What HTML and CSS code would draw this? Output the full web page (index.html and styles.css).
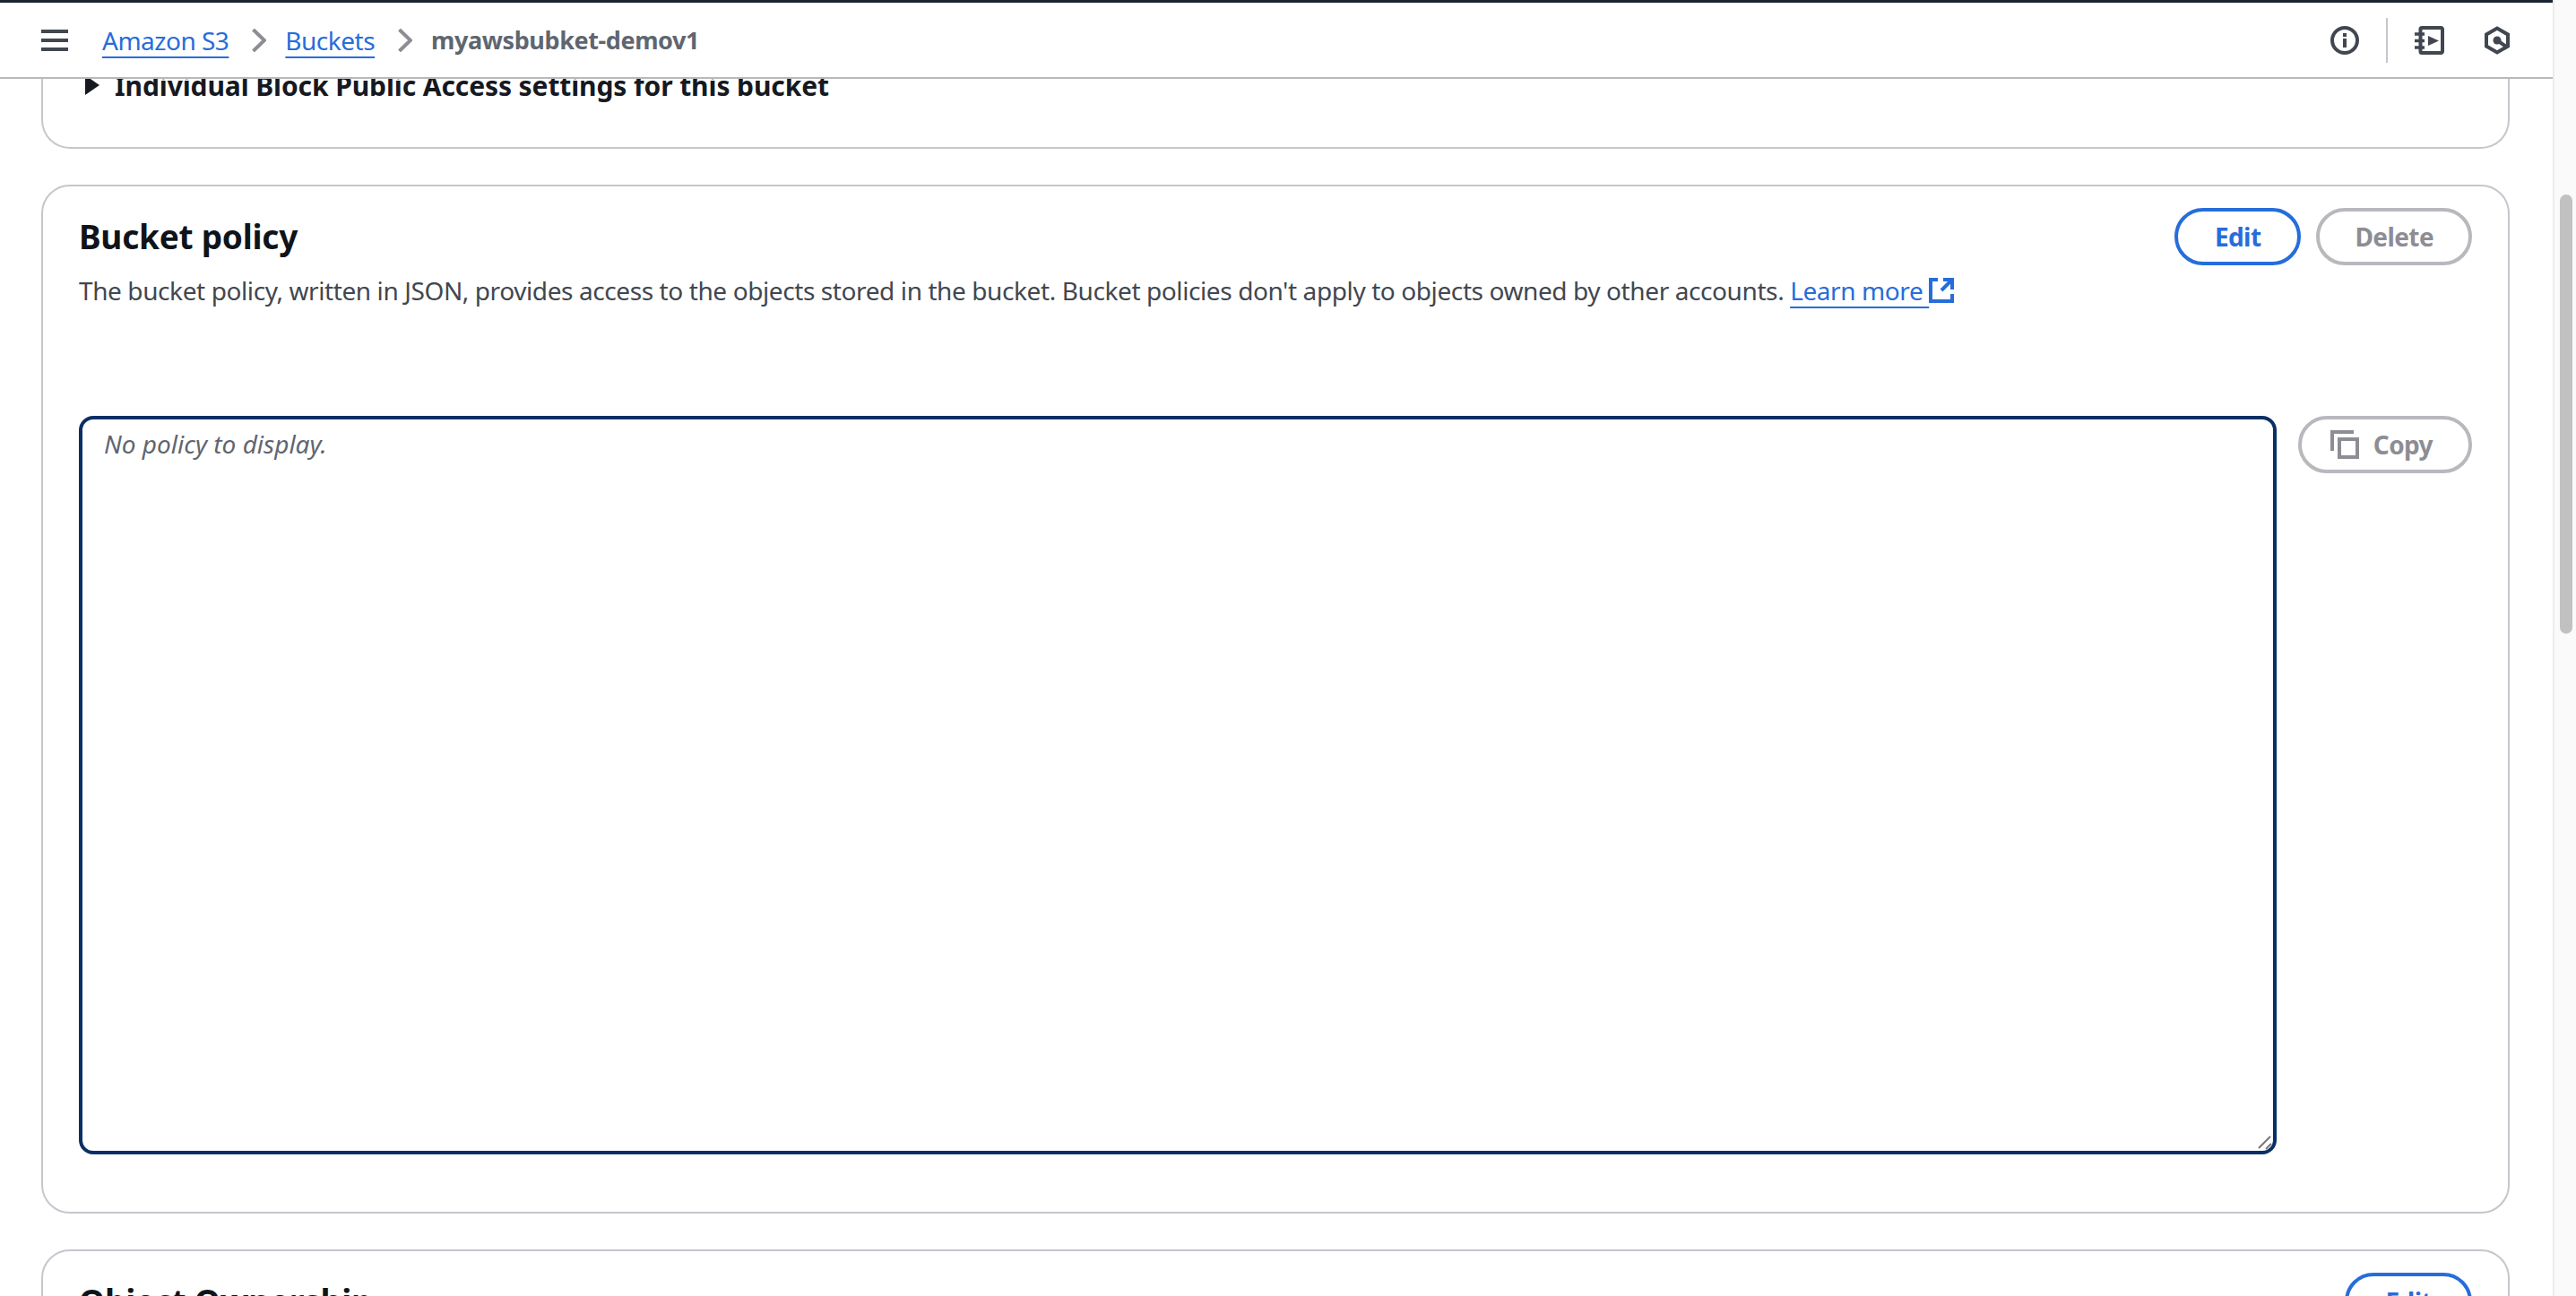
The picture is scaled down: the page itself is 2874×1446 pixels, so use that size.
FILE: index.html
```html
<!DOCTYPE html>
<html lang="en">
<head>
<meta charset="utf-8">
<title>myawsbubket-demov1 - Amazon S3</title>
<link rel="stylesheet" href="styles.css">
</head>
<body>
<div class="window">
  <div class="main">
    <header class="topbar">
      <nav class="crumbs">
        <svg class="menu-icon" viewBox="0 0 30 24" aria-hidden="true"><path d="M0 2h30M0 12h30M0 22h30"/></svg>
        <a class="crumb-link" href="#">Amazon S3</a>
        <svg class="chevron" viewBox="0 0 16 26" aria-hidden="true"><path d="M1.500 1l12.500 12L1.500 25"/></svg>
        <a class="crumb-link" href="#">Buckets</a>
        <svg class="chevron" viewBox="0 0 16 26" aria-hidden="true"><path d="M1.500 1l12.500 12L1.500 25"/></svg>
        <span class="crumb-current">myawsbubket-demov1</span>
      </nav>
      <div class="tools">
        <svg class="tool tool-info" viewBox="0 0 32 32" aria-hidden="true"><circle cx="16" cy="16" r="14"/><path d="M16 14v10"/><path d="M16 8v4"/></svg>
        <span class="tool-divider"></span>
        <svg class="tool tool-notebook" viewBox="0 0 33 32" aria-hidden="true"><path d="M8 2h21.500a1.500 1.500 0 0 1 1.500 1.500v25a1.500 1.500 0 0 1-1.500 1.500H8a1.500 1.500 0 0 1-1.500-1.500v-25A1.500 1.500 0 0 1 8 2z"/><path class="rings" d="M0 9h11M0 16.500h11M0 24h11"/><path class="fill" d="M15 11l12 5.500-12 5.500z"/></svg>
        <svg class="tool tool-hex" viewBox="0 0 28 32" aria-hidden="true"><path d="M14 2.500l12 7v13l-12 7-12-7v-13z"/><circle class="fill" cx="14" cy="16" r="4.500"/><path d="M14 16l11 7.500"/></svg>
      </div>
    </header>
    <div class="content">
      <section class="card card-clipped">
        <div class="disclosure"><span class="caret"></span><strong>Individual Block Public Access settings for this bucket</strong></div>
      </section>
      <section class="card">
        <div class="card-head">
          <h2>Bucket policy</h2>
          <div class="actions">
            <button class="btn btn-edit" type="button">Edit</button>
            <button class="btn btn-disabled" type="button">Delete</button>
          </div>
        </div>
        <p class="desc">The bucket policy, written in JSON, provides access to the objects stored in the bucket. Bucket policies don't apply to objects owned by other accounts. <a class="learn" href="#">Learn more&nbsp;</a><svg class="ext-icon" viewBox="0 0 28 28" aria-hidden="true"><path d="M10 2H2v24h24V18"/><path d="M16 2h10v11M14 14L25 3"/></svg></p>
        <div class="policy-row">
          <div class="policy-box">
            <textarea class="policy" placeholder="No policy to display."></textarea>
            <svg class="grip" viewBox="0 0 16 16" aria-hidden="true"><path d="M1 14L14 1M9 15l6-6"/></svg>
          </div>
          <button class="btn btn-disabled btn-copy" type="button"><svg class="copy-icon" viewBox="0 0 32 32" aria-hidden="true"><path d="M2 23V2h24"/><path d="M10 10h20v20H10z"/></svg>Copy</button>
        </div>
      </section>
      <section class="card">
        <div class="card-head">
          <h2>Object Ownership</h2>
          <div class="actions">
            <button class="btn btn-edit" type="button">Edit</button>
          </div>
        </div>
      </section>
    </div>
  </div>
  <div class="scrollbar"><div class="thumb"></div></div>
</div>
</body>
</html>
```
FILE: styles.css
```css
* { box-sizing: border-box; }
html, body { margin: 0; height: 100%; overflow: hidden; background: #fff; }
body { font-family: "Noto Sans", "Open Sans", sans-serif; font-size: 28px; color: #16191f; }
.window { display: grid; grid-template-columns: 1fr 26px; height: 1446px; }
.main { display: flex; flex-direction: column; overflow: hidden; min-width: 0; }

.topbar {
  position: relative; z-index: 2; flex: none;
  display: flex; align-items: center; justify-content: space-between;
  height: 88px; padding: 0 48px 0 46px; background: #fff;
  border-top: 3px solid #1b2430; border-bottom: 2px solid #b8b8bd;
}
.crumbs { display: flex; align-items: center; }
.menu-icon { width: 30px; height: 24px; margin-right: 38px; fill: none; stroke: #414750; stroke-width: 4; }
.crumb-link { color: #266ddb; letter-spacing: -0.5px; text-decoration: underline; text-decoration-thickness: 2px; text-underline-offset: 7px; text-decoration-skip-ink: none; }
.chevron { width: 16px; height: 26px; margin: 0 21px 0 26px; fill: none; stroke: #8d8d94; stroke-width: 4; }
.crumb-current { font-size: 27px; font-weight: 700; letter-spacing: -0.4px; color: #5f6670; }
.tools { display: flex; align-items: center; }
.tool { height: 32px; fill: none; stroke: #414750; stroke-width: 4; }
.tool .fill { fill: #414750; stroke: none; }
.tool .rings { stroke-width: 3.500; }
.tool-info { width: 32px; }
.tool-divider { width: 2px; height: 50px; margin: 0 30px; background: #c6c6cd; }
.tool-notebook { width: 33px; margin-right: 45px; }
.tool-hex { width: 28px; }

.content { flex: 1; min-height: 0; overflow: hidden; display: flex; flex-direction: column; gap: 40px; padding: 0 48px 0 46px; margin-top: -13px; }
.card { flex: none; border: 2px solid #c6c6cd; border-radius: 32px; padding: 24px 40px 64px 40px; background: #fff; }
.card-clipped { border-top: 0; border-top-left-radius: 0; border-top-right-radius: 0; padding: 0 40px 49px 47px; }
.disclosure { display: flex; align-items: center; height: 40px; gap: 17px; font-size: 30px; letter-spacing: -0.1px; }
.disclosure strong { font-weight: 700; }
.caret { width: 0; height: 0; border-left: 16px solid #16191f; border-top: 11px solid transparent; border-bottom: 11px solid transparent; }

.card-head { display: flex; align-items: center; justify-content: space-between; height: 64px; }
h2 { margin: 0; font-size: 37px; font-weight: 700; letter-spacing: -0.25px; color: #0f141a; line-height: 44px; }
.actions { display: flex; gap: 17px; }
.btn {
  height: 64px; padding: 0 39px; border-radius: 32px; background: #fff; letter-spacing: -0.6px;
  font: 700 28px "Noto Sans", "Open Sans", sans-serif; display: flex; align-items: center;
}
.btn-edit { color: #266ddb; border: 4px solid #266ddb; padding: 0 41px; }
.btn-disabled { color: #8d8d94; border: 4px solid #b8b8bd; }
.desc { margin: 8px 0 0; line-height: 40px; color: #414750; letter-spacing: -0.4px; }
.learn { color: #266ddb; text-decoration: underline; text-decoration-thickness: 2px; text-underline-offset: 7px; text-decoration-skip-ink: none; }
.ext-icon { width: 28px; height: 28px; fill: none; stroke: #266ddb; stroke-width: 4; vertical-align: -3px; }
.policy-row { display: flex; gap: 24px; margin-top: 120px; align-items: flex-start; }
.policy-box { position: relative; flex: 1; height: 824px; }
.policy {
  display: block; width: 100%; height: 100%; border: 4px solid #0a2f66; border-radius: 16px; outline: none;
  padding: 13px 24px; font: italic 28px "Noto Sans", "Open Sans", sans-serif; line-height: 28px; resize: none; color: #16191f;
}
.policy::placeholder { color: #5f6670; opacity: 1; }
.grip { position: absolute; right: 5px; bottom: 5px; width: 16px; height: 16px; fill: none; stroke: #767676; stroke-width: 2; }
.btn-copy { padding: 0 40px 0 32px; gap: 16px; flex: none; }
.copy-icon { width: 32px; height: 32px; fill: none; stroke: #8d8d94; stroke-width: 4; }

.scrollbar { background: #fafafa; border-left: 2px solid #ececec; padding: 217px 4px 0 6px; }
.thumb { height: 490px; border-radius: 8px; background: #c1c1c1; }
```
